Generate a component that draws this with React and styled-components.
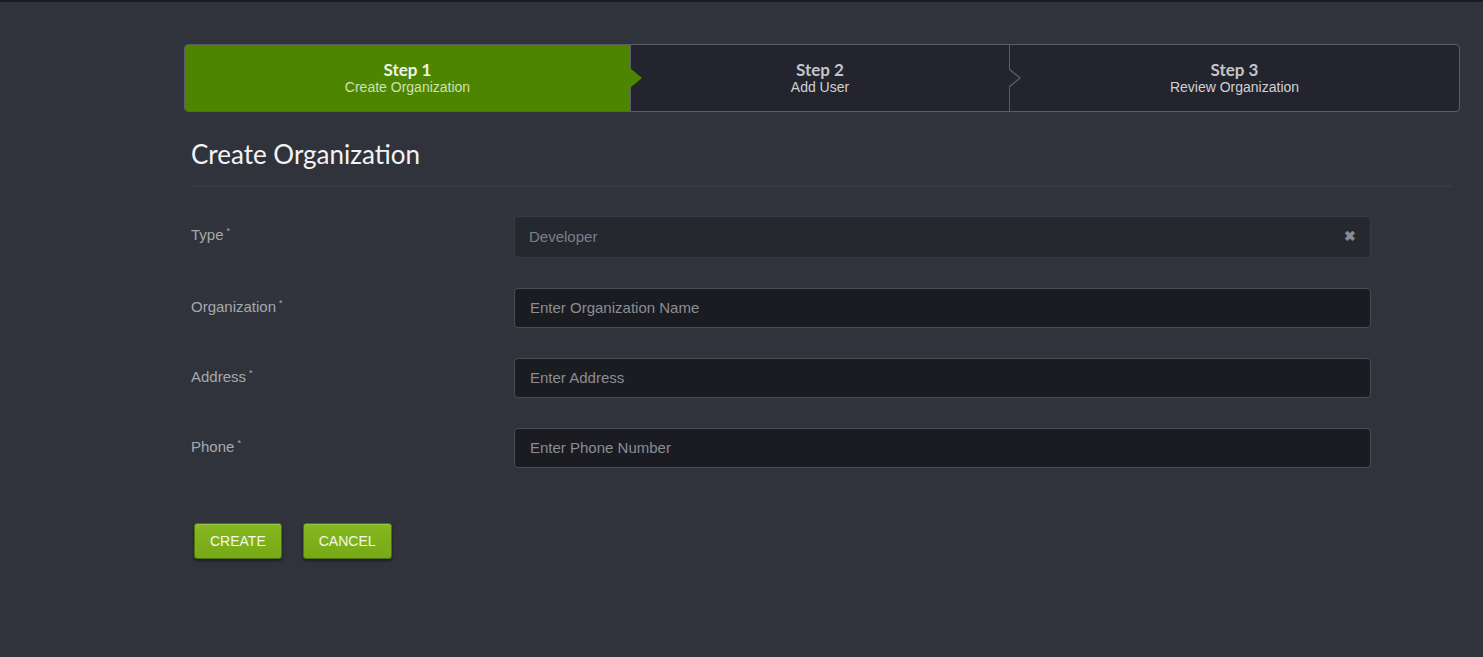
import React from "react";
import styled, { createGlobalStyle } from "styled-components";

const GlobalStyle = createGlobalStyle`
  html, body {
    margin: 0;
    padding: 0;
    background: #30333c;
  }
  body {
    font-family: "Liberation Sans", Arial, sans-serif;
  }
`

const Page = styled.div`
  min-height: 657px;
  box-sizing: border-box;
  border-top: 2px solid #1c1d24;
  background: #30333c;
  padding: 42px 23px 0 184px;
`

const Wizard = styled.div`
  display: flex;
  height: 68px;
  box-sizing: border-box;
  border: 1px solid #5b5d66;
  border-radius: 4px;
  background: #23242d;
`

const Step = styled.div`
  position: relative;
  flex: 0 0 ${props => props.width}px;
  display: flex;
  flex-direction: column;
  align-items: center;
  justify-content: center;
  background: ${props => props.active ? "#4e8500" : "transparent"};
  border-left: ${props => props.first ? "none" : "1px solid #5b5d66"};
  border-radius: ${props => props.first ? "3px 0 0 3px" : props.last ? "0 3px 3px 0" : "0"};
  box-sizing: border-box;

  &::after {
    content: "";
    display: ${props => props.last ? "none" : "block"};
    position: absolute;
    top: 23px;
    right: -12px;
    width: 0;
    height: 0;
    border-top: 10px solid transparent;
    border-bottom: 10px solid transparent;
    border-left: 12px solid ${props => props.active ? "#4e8500" : "#5b5d66"};
    z-index: 2;
  }
  &::before {
    content: "";
    display: ${props => props.last || props.active ? "none" : "block"};
    position: absolute;
    top: 24px;
    right: -10px;
    width: 0;
    height: 0;
    border-top: 9px solid transparent;
    border-bottom: 9px solid transparent;
    border-left: 11px solid #23242d;
    z-index: 3;
  }
`

const StepTitle = styled.div`
  font-family: Lato, "Open Sans", sans-serif;
  font-weight: 700;
  font-size: 17px;
  line-height: 18px;
  color: ${props => props.active ? "#eef4e4" : "#c3c5cb"};
`

const StepSub = styled.div`
  font-size: 14px;
  line-height: 16px;
  color: ${props => props.active ? "#cfe0b8" : "#d0d1d5"};
`

const Content = styled.div`
  padding: 0 8px 0 7px;
`

const Heading = styled.h2`
  margin: 0;
  padding: 27px 0 16px;
  font-family: Lato, "Open Sans", sans-serif;
  font-weight: 400;
  font-size: 26px;
  line-height: 30px;
  color: #f3f3f5;
  border-bottom: 2px solid #373a44;
`

const Form = styled.div`
  display: flex;
  flex-direction: column;
  gap: 30px;
  padding-top: 29px;
`

const Row = styled.div`
  display: grid;
  grid-template-columns: 323px 857px;
  align-items: start;
`

const Label = styled.label`
  font-size: 15px;
  line-height: 18px;
  padding-top: 10px;
  color: #a7a9ae;

  sup {
    font-size: 9px;
    margin-left: 3px;
    vertical-align: 6px;
    line-height: 0;
  }
`

const Field = styled.input`
  box-sizing: border-box;
  width: 100%;
  height: 40px;
  padding: 0 15px 2px;
  border: 1px solid #4a4c55;
  border-radius: 4px;
  background: #1b1c22;
  color: #d0d1d5;
  font-family: "Liberation Sans", Arial, sans-serif;
  font-size: 15px;
  outline: none;

  &::placeholder {
    color: #8c8d92;
  }
`

const Select = styled.div`
  box-sizing: border-box;
  height: 42px;
  padding: 0 14px 2px;
  display: flex;
  align-items: center;
  justify-content: space-between;
  border: 1px solid #393b44;
  border-radius: 4px;
  background: #262830;
  color: #7d7f86;
  font-size: 15px;
`

const Clear = styled.span`
  color: #8a8b90;
  font-size: 14px;
  font-weight: 700;
`

const Actions = styled.div`
  display: flex;
  gap: 21px;
  padding: 55px 0 0 3px;
`

const Button = styled.button`
  height: 36px;
  padding: 0 15px;
  border: 1px solid #4f7410;
  border-radius: 3px;
  background: linear-gradient(#86b821, #77a816);
  box-shadow: 0 2px 3px rgba(0,0,0,.45), inset 0 1px 0 rgba(255,255,255,.15);
  color: #f4f8ea;
  font-family: "Liberation Sans", Arial, sans-serif;
  font-size: 14px;
  text-transform: uppercase;
  cursor: pointer;
`

const steps = [
  { title: "Step 1", sub: "Create Organization", width: 445 },
  { title: "Step 2", sub: "Add User", width: 379 },
  { title: "Step 3", sub: "Review Organization", width: 450 }
]

const fields = [
  { label: "Organization", placeholder: "Enter Organization Name" },
  { label: "Address", placeholder: "Enter Address" },
  { label: "Phone", placeholder: "Enter Phone Number" }
]

export default function App() {
  return (
    <Page>
      <GlobalStyle />
      <Wizard>
        {steps.map((step, index) => (
          <Step
            key={`step-${index}`}
            width={step.width}
            active={index === 0}
            first={index === 0}
            last={index === steps.length - 1}
          >
            <StepTitle active={index === 0}>{step.title}</StepTitle>
            <StepSub active={index === 0}>{step.sub}</StepSub>
          </Step>
        ))}
      </Wizard>
      <Content>
        <Heading>Create Organization</Heading>
        <Form>
          <Row>
            <Label>Type<sup>*</sup></Label>
            <Select>
              <span>Developer</span>
              <Clear>✖</Clear>
            </Select>
          </Row>
          {fields.map((field, index) => (
            <Row key={`field-${index}`}>
              <Label>{field.label}<sup>*</sup></Label>
              <Field placeholder={field.placeholder} />
            </Row>
          ))}
        </Form>
        <Actions>
          <Button>Create</Button>
          <Button>Cancel</Button>
        </Actions>
      </Content>
    </Page>
  );
}
